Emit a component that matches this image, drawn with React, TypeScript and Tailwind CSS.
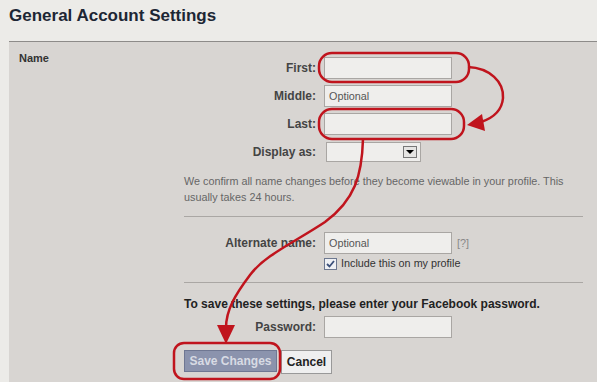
import React from "react";

const font = { fontFamily: '"Liberation Sans", Arial, sans-serif' };

function Row({ label, children }: { label: string; children: React.ReactNode }) {
  return (
    <div className="flex items-center h-[22px]">
      <div className="w-[132px] text-right font-bold text-[12px] text-[#444]">{label}</div>
      <div className="ml-[8px] flex items-center">{children}</div>
    </div>
  );
}

function TextBox({ placeholder }: { placeholder?: string }) {
  return (
    <div className="w-[128px] h-[22px] border border-[#a9a6a3] bg-[#efeeec] px-[4px] flex items-center text-[#555]">
      {placeholder}
    </div>
  );
}

function Annotations() {
  return (
    <svg className="absolute inset-0 pointer-events-none" width="597" height="382" viewBox="0 0 597 382">
      <g fill="none" stroke="#c0141d" strokeWidth="2.5">
        <rect x="319" y="53" width="150" height="29" rx="13" />
        <rect x="319" y="109" width="145" height="30" rx="13" />
        <rect x="174" y="343" width="106" height="36" rx="10" />
        <path d="M468,67 C490,68 504,82 503,98 C502,110 493,118 481,122" />
        <path d="M363,139 C362,175 355,200 325,222 C295,242 265,255 250,275 C235,295 226,310 226,328" />
      </g>
      <g fill="#c0141d">
        <polygon points="467,125 482,114 485,131" />
        <polygon points="226,344 217,325 235,325" />
      </g>
    </svg>
  );
}

export default function App() {
  return (
    <div className="relative w-[597px] h-[382px] overflow-hidden bg-[#ecebe8] flex flex-col text-[10.8px]" style={font}>
      <h1 className="h-[41px] pl-[9px] pt-[3px] text-[17px] font-bold text-[#1d2634]">General Account Settings</h1>
      <div className="ml-[9px] flex-1 border-t border-[#8d8b89] bg-[#d8d5d2] flex">
        <div className="w-[175px] pl-[10px] pt-[8px] font-bold text-[11px] text-[#333]">Name</div>
        <div className="w-[399px] pt-[15px] flex flex-col">
          <div className="flex flex-col gap-[6px]">
            <Row label="First:">
              <TextBox />
            </Row>
            <Row label="Middle:">
              <TextBox placeholder="Optional" />
            </Row>
            <Row label="Last:">
              <TextBox />
            </Row>
            <Row label="Display as:">
              <div className="ml-[2px] w-[95px] h-[20px] border border-[#a9a6a3] bg-[#efeeec] flex items-center justify-end pr-[3px]">
                <div className="w-[14px] h-[12px] border border-[#777] bg-[#e6e5e3] flex items-center justify-center">
                  <div className="w-0 h-0 border-l-[4px] border-r-[4px] border-t-[4px] border-l-transparent border-r-transparent border-t-black" />
                </div>
              </div>
            </Row>
          </div>
          <p className="mt-[10px] leading-[16px] text-[#666]">
            We confirm all name changes before they become viewable in your profile. This usually takes 24 hours.
          </p>
          <div className="mt-[11px] border-t border-[#aaa7a4]" />
          <div className="mt-[15px]">
            <Row label="Alternate name:">
              <TextBox placeholder="Optional" />
              <span className="ml-[5px] text-[#888]">[?]</span>
            </Row>
          </div>
          <div className="mt-[3px] ml-[140px] h-[13px] flex items-center gap-[4px] text-[#333]">
            <div className="w-[13px] h-[12px] border border-[#6d7890] bg-[#eef0f4] flex items-center justify-center">
              <svg width="9" height="8" viewBox="0 0 9 8">
                <path d="M1,4 L3.5,6.5 L8,1" fill="none" stroke="#3a4f7a" strokeWidth="1.8" />
              </svg>
            </div>
            <span>Include this on my profile</span>
          </div>
          <div className="mt-[12px] border-t border-[#aaa7a4]" />
          <div className="mt-[14px] h-[14px] leading-[14px] font-bold text-[12px] text-[#222]">
            To save these settings, please enter your Facebook password.
          </div>
          <div className="mt-[5px]">
            <Row label="Password:">
              <TextBox />
            </Row>
          </div>
          <div className="mt-[12px] flex items-start gap-[4px]">
            <button className="w-[93px] h-[22px] border border-[#6f7792] bg-[#8b93ad] text-[#d8dbe4] font-bold text-[12px]">
              Save Changes
            </button>
            <button className="w-[51px] h-[24px] border border-[#999] bg-[#efefef] text-[#222] font-bold text-[12px]">
              Cancel
            </button>
          </div>
        </div>
      </div>
      <Annotations />
    </div>
  );
}
